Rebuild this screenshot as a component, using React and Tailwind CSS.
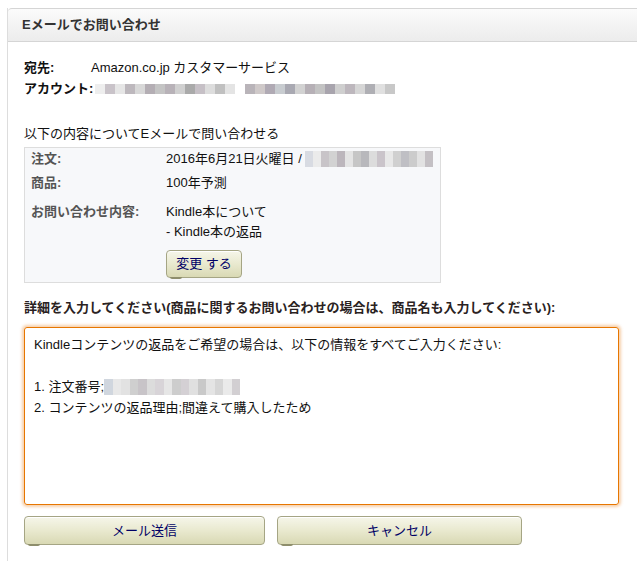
const mosaicA = ['#eee','#c9c3c9','#e6e6e6','#bdb8bd','#d8d8d8','#b4aeb4','#c4c4c4','#b8b2b8','#d0d0d0','#aaa','#c6c0c6','#ddd','#c0c0c0','#e4e4e4','#fff','#b9b4b9','#cfc9c9','#b0aab4','#c8ccd0','#a9a9b2','#d2d2d2','#b6b0b6','#c3c3c3','#a8a4ad','#cfcfcf','#bdb7bd','#d6d6d6','#afafb4','#e0e0e0','#c8c8c8'];
const mosaicB = ['#d8dbe2','#ebebeb','#c8c4c8','#d2d2d2','#bcb6bc','#e4e4e4','#c6c6c6','#b8b8bc','#dcdcdc','#cac4ca','#e8e8e8','#d0d0d0','#bfbfc4','#cccccc','#e2e2e2','#c4c0c4'];
const mosaicC = ['#d0d6de','#e8e8e8','#e2e2e2','#cfcfcf','#c8c4c8','#dcdcdc','#d8d4d8','#e6e6e6','#cdcdcd','#d4d0d4','#e0e0e0','#c9c9c9','#e4e4e4','#d6d6d6','#eaeaea','#d2cfd2'];

// blurred-out personal info, drawn as a pixel mosaic
const Mosaic = ({ colors, cell = 10, h = 12 }) => (
  <span className="inline-flex shrink-0 align-middle">
    {colors.map((c, i) => (
      <span key={i} className="shrink-0" style={{ backgroundColor: c, width: cell, height: h }} />
    ))}
  </span>
);

const font = { fontFamily: '"Liberation Sans", "Noto Sans CJK JP", sans-serif' };

const BeigeButton = ({ children, className = '' }) => (
  <button
    className={`relative rounded-[4px] border border-[#a5a584] bg-gradient-to-b from-[#f6f6ea] via-[#e9e9cf] to-[#d9d9b4] text-[13px] text-[#000066] shadow-[inset_0_1px_0_#fff] ${className}`}
  >
    {children}
    <span className="absolute left-[3px] -bottom-[2px] h-[2px] w-[12px] rounded-b bg-[#8e8e6c]" />
  </button>
);

export default function App() {
  return (
    <div className="min-h-[561px] w-[637px] overflow-hidden bg-white text-[13px] text-[#111]" style={font}>
      <div className="ml-[7px] mt-[8px] border-l border-[#dddddd]">
        <div className="flex h-[34px] items-center rounded-tl-[4px] border-t border-b border-[#d5d5d5] bg-gradient-to-b from-[#fbfbfb] to-[#ececec] pl-[14px] text-[13px] font-bold text-[#333]">
          Eメールでお問い合わせ
        </div>

        <div className="pl-[16px] pt-[16px]">
          <div className="flex h-[20px] items-center whitespace-nowrap">
            <span className="w-[67px] shrink-0 font-bold text-[#111]">宛先:</span>
            <span>Amazon.co.jp カスタマーサービス</span>
          </div>
          <div className="flex h-[22px] items-center whitespace-nowrap">
            <span className="mr-[2px] shrink-0 font-bold text-[#111]">アカウント:</span>
            <Mosaic colors={mosaicA} cell={10} h={10} />
          </div>

          <div className="mt-[24px] leading-[20px]">以下の内容についてEメールで問い合わせる</div>

          <div className="mt-[3px] w-[417px] border border-[#dddddd] bg-[#f7f8fa] px-[6px] pb-[4px]">
            <div className="flex h-[22px] items-center whitespace-nowrap">
              <span className="w-[135px] shrink-0 font-bold text-[#555]">注文:</span>
              <span className="shrink-0">2016年6月21日火曜日 /&nbsp;</span>
              <Mosaic colors={mosaicB} cell={8} h={16} />
            </div>
            <div className="flex h-[26px] items-center whitespace-nowrap">
              <span className="w-[135px] shrink-0 font-bold text-[#555]">商品:</span>
              <span>100年予測</span>
            </div>
            <div className="mt-[6px] flex whitespace-nowrap">
              <span className="w-[135px] shrink-0 font-bold leading-[20px] text-[#555]">お問い合わせ内容:</span>
              <div className="leading-[20px]">
                <div>Kindle本について</div>
                <div>- Kindle本の返品</div>
                <BeigeButton className="mt-[8px] block h-[28px] w-[76px]">変更 する</BeigeButton>
              </div>
            </div>
          </div>

          <div className="mt-[15px] whitespace-nowrap font-bold leading-[20px] text-[#2a2222]">
            詳細を入力してください(商品に関するお問い合わせの場合は、商品名も入力してください):
          </div>

          <div className="mt-[9px] h-[178px] w-[595px] rounded-[3px] border border-[#e77600] px-[9px] pt-[6px] leading-[21px] shadow-[0_0_3px_2px_rgba(228,121,17,0.35)]">
            <div>Kindleコンテンツの返品をご希望の場合は、以下の情報をすべてご入力ください:</div>
            <div>&nbsp;</div>
            <div className="flex items-center">
              <span>1. 注文番号;</span>
              <Mosaic colors={mosaicC} cell={8.5} h={16} />
            </div>
            <div>2. コンテンツの返品理由;間違えて購入したため</div>
          </div>

          <div className="mt-[11px] flex gap-[12px]">
            <BeigeButton className="h-[29px] w-[241px]">メール送信</BeigeButton>
            <BeigeButton className="h-[29px] w-[245px]">キャンセル</BeigeButton>
          </div>
          <div className="h-[20px]" />
        </div>
      </div>
    </div>
  );
}
